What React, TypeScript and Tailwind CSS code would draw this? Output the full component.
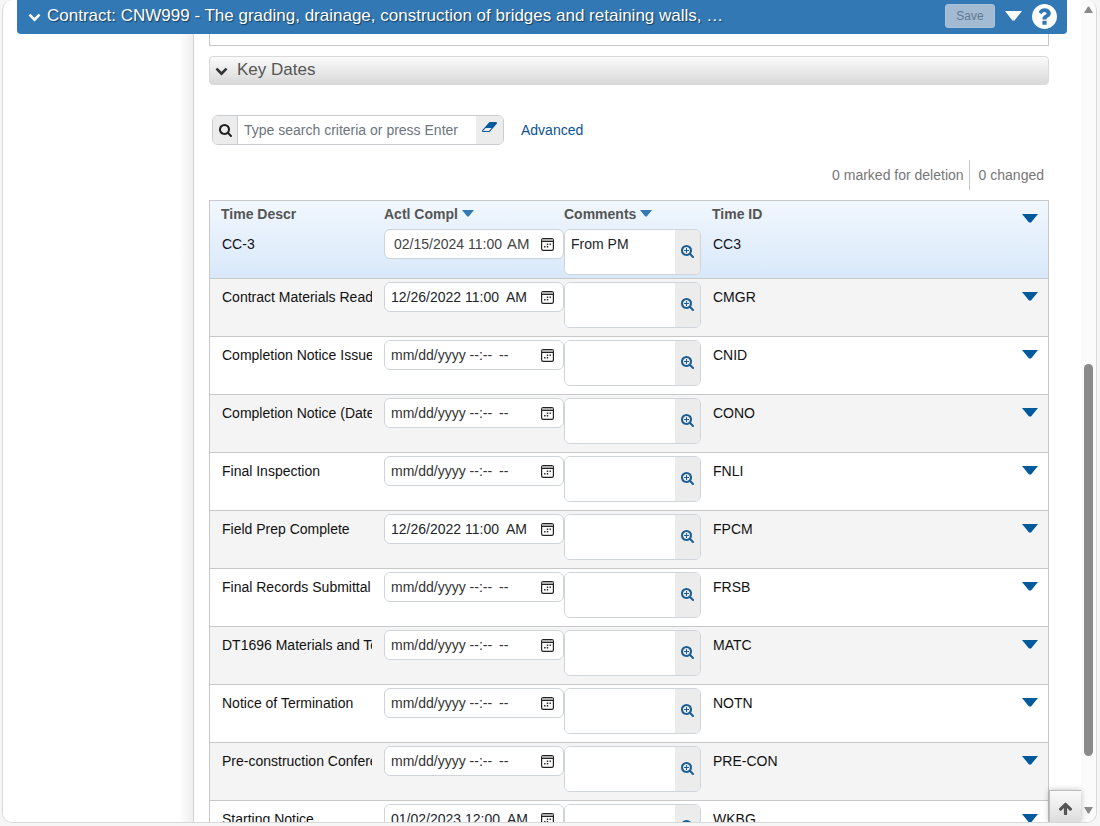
import React from 'react';

type IconProps = { className?: string };

const ChevronDown = ({ className }: IconProps) => (
  <svg viewBox="0 0 1792 1792" className={className} fill="currentColor" aria-hidden="true">
    <path d="M1683 808l-742 741q-19 19-45 19t-45-19L109 808q-19-19-19-45.500T109 717l166-165q19-19 45-19t45 19l531 531 531-531q19-19 45-19t45 19l166 165q19 19 19 45.500t-19 45.500z" />
  </svg>
);

const lens =
  'M1152 704q0-185-131.500-316.500T704 256 387.500 387.500 256 704t131.500 316.500T704 1152t316.500-131.500T1152 704zm512 832q0 52-38 90t-90 38q-54 0-90-38l-343-342q-179 124-399 124-143 0-273.500-55.500t-225-150-150-225T0 704t55.500-273.500 150-225 225-150T704 0t273.500 55.500 225 150 150 225T1408 704q0 220-124 399l343 343q37 37 37 90z';

const SearchIcon = ({ className }: IconProps) => (
  <svg viewBox="0 0 1664 1664" className={className} fill="currentColor" aria-hidden="true">
    <path d={lens} />
  </svg>
);

const SearchPlusIcon = ({ className }: IconProps) => (
  <svg viewBox="0 0 1664 1664" className={className} fill="currentColor" aria-hidden="true">
    <path d={lens} />
    <path d="M640 384h128v256h256v128H768v256H640V768H384V640h256z" />
  </svg>
);

const EraserIcon = ({ className }: IconProps) => (
  <svg viewBox="0 0 1920 1792" className={className} fill="currentColor" aria-hidden="true">
    <path d="M896 1408l336-384h-768l-336 384h768zm1013-1077q15 34 9.500 71.500t-30.500 65.500l-896 1024q-38 44-96 44h-768q-38 0-69.500-20.500t-47.500-54.500q-15-34-9.500-71.500t30.500-65.500l896-1024q38-44 96-44h768q38 0 69.500 20.500t47.500 54.500z" />
  </svg>
);

const HelpIcon = ({ className }: IconProps) => (
  <svg viewBox="128 128 1536 1536" className={className} fill="currentColor" aria-hidden="true">
    <path d="M1024 1376v-192q0-14-9-23t-23-9h-192q-14 0-23 9t-9 23v192q0 14 9 23t23 9h192q14 0 23-9t9-23zm256-672q0-88-55.500-163t-138.500-116-170-41q-243 0-371 213-15 24 8 42l132 100q7 6 19 6 16 0 25-12 53-68 86-92 34-24 86-24 48 0 85.500 26t37.500 59q0 38-20 61t-68 45q-63 28-115.500 86.500T768 1020v36q0 14 9 23t23 9h192q14 0 23-9t9-23q0-19 21.500-49.500t54.500-49.500q32-18 49-28.500t46-35 44.500-48 28-60.500 12.500-81zm384 192q0 209-103 385.500T1281.500 1561 896 1664t-385.500-103T231 1281.500 128 896t103-385.500T510.500 231 896 128t385.500 103T1561 510.500 1664 896z" />
  </svg>
);

const ArrowUpIcon = ({ className }: IconProps) => (
  <svg viewBox="0 0 1792 1792" className={className} fill="currentColor" aria-hidden="true">
    <path d="M1675 971q0 51-37 90l-75 75q-38 38-91 38-54 0-90-38l-294-293v704q0 52-37.500 84.500T960 1664H832q-53 0-90.500-32.500T704 1547V843l-294 293q-36 38-90 38t-90-38l-75-75q-38-38-38-90 0-53 38-91l651-651q35-37 90-37 54 0 91 37l651 651q37 39 37 91z" />
  </svg>
);

const CalendarIcon = ({ className }: IconProps) => (
  <svg viewBox="0 0 13 13" className={className} aria-hidden="true">
    <rect x="0.600" y="0.600" width="11.800" height="11.800" rx="1.600" fill="none" stroke="#222" strokeWidth="1.200" />
    <path d="M1 1.200h11v1.800H1z" fill="#aaa" />
    <path d="M1 3h11v1H1z" fill="#222" />
    <path d="M5.800 5.600h1.400v1.400H5.800zM8.500 5.600h1.400v1.400H8.500zM3.100 8.100h1.400v1.400H3.100zM5.800 8.100h1.400v1.400H5.800z" fill="#222" />
  </svg>
);

const Caret = ({ className }: IconProps) => (
  <svg viewBox="0 0 16 9" preserveAspectRatio="none" className={className} fill="currentColor" aria-hidden="true">
    <path d="M0 0h16L9 8.500H7z" />
  </svg>
);

type Row = { id: string; descr: string; date?: string; meridiem?: string; comment?: string };

const rows: Row[] = [
  { id: 'CC3', descr: 'CC-3', date: '02/15/2024 11:00', meridiem: 'AM', comment: 'From PM' },
  { id: 'CMGR', descr: 'Contract Materials Ready', date: '12/26/2022 11:00\u2002AM' },
  { id: 'CNID', descr: 'Completion Notice Issued' },
  { id: 'CONO', descr: 'Completion Notice (Date)' },
  { id: 'FNLI', descr: 'Final Inspection' },
  { id: 'FPCM', descr: 'Field Prep Complete', date: '12/26/2022 11:00\u2002AM' },
  { id: 'FRSB', descr: 'Final Records Submittal' },
  { id: 'MATC', descr: 'DT1696 Materials and Testing' },
  { id: 'NOTN', descr: 'Notice of Termination' },
  { id: 'PRE-CON', descr: 'Pre-construction Conference' },
  { id: 'WKBG', descr: 'Starting Notice', date: '01/02/2023 12:00\u2002AM' },
];

function DateField({ row }: { row: Row }) {
  return (
    <div className="flex h-[30px] w-[180px] items-center rounded-md border border-[#ced4da] bg-white pr-[9px] pl-[6px]">
      {row.meridiem ? (
        <div className="flex min-w-0 flex-1 items-center gap-1 pl-[3px]">
          <input aria-label={`Actl Compl ${row.id}`} defaultValue={row.date} className="w-[109px] bg-transparent text-[#444] outline-none" />
          <input aria-label={`Actl Compl period ${row.id}`} defaultValue={row.meridiem} className="w-[28px] bg-transparent text-[15px] leading-5 text-[#444] outline-none" />
        </div>
      ) : (
        <input
          aria-label={`Actl Compl ${row.id}`}
          defaultValue={row.date}
          placeholder={'mm/dd/yyyy --:--\u2002--'}
          className="min-w-0 flex-1 bg-transparent text-[#212529] outline-none placeholder:text-[#333]"
        />
      )}
      <button type="button" aria-label={`Pick date ${row.id}`}>
        <CalendarIcon className="block size-[13px]" />
      </button>
    </div>
  );
}

function CommentField({ row }: { row: Row }) {
  return (
    <div className="flex h-[46px] w-[137px] overflow-hidden rounded-md border border-[#ced4da] bg-white">
      <textarea
        aria-label={`Comments ${row.id}`}
        defaultValue={row.comment}
        className="block min-w-0 flex-1 resize-none overflow-hidden bg-white px-[6px] pt-1 leading-5 text-[#212529] outline-none"
      />
      <button type="button" aria-label={`Expand comments ${row.id}`} className="flex w-[25px] items-center justify-center bg-[#ececec] pb-[2px] text-[#1b5e96]">
        <SearchPlusIcon className="block size-[13px]" />
      </button>
    </div>
  );
}

function KeyDatesTable() {
  return (
    <table className="w-full table-fixed border-separate border-spacing-0 border border-b-0 border-[#c8c8c8] bg-[linear-gradient(#f1f7fe,#d8e8f9)] bg-[length:100%_78px] bg-no-repeat text-left">
      <colgroup>
        <col className="w-[174px]" />
        <col className="w-[180px]" />
        <col className="w-[148px]" />
        <col />
        <col className="w-[48px]" />
      </colgroup>
      <thead>
        <tr className="h-[25px] text-[#555]">
          <th className="p-0 pl-[11px] font-bold">Time Descr</th>
          <th className="p-0 font-bold">
            <span className="flex items-center gap-1">
              Actl Compl
              <Caret className="h-[7px] w-[12px] text-[#337ab7]" />
            </span>
          </th>
          <th className="p-0 font-bold">
            <span className="flex items-center gap-1">
              Comments
              <Caret className="h-[7px] w-[12px] text-[#337ab7]" />
            </span>
          </th>
          <th className="p-0 font-bold">Time ID</th>
          <th className="p-0 pt-[13px] pr-[10px] align-top">
            <button type="button" aria-label="Actions CC3" className="ml-auto block text-[#005a9c]">
              <Caret className="block h-[9px] w-4" />
            </button>
          </th>
        </tr>
      </thead>
      <tbody>
        {rows.map((row, i) => {
          const line = 'border-b border-[#c8c8c8] p-0 align-top';
          return (
            <tr key={row.id} className={i === 0 ? 'h-[53px]' : i % 2 ? 'h-[58px] bg-[#f4f4f4]' : 'h-[58px] bg-white'}>
              <td className={line}>
                <div className="mt-2 mr-3 ml-3 overflow-hidden leading-5 whitespace-nowrap">{row.descr}</div>
              </td>
              <td className={line}>
                <div className="pt-[3px]">
                  <DateField row={row} />
                </div>
              </td>
              <td className={line}>
                <div className="pt-[3px]">
                  <CommentField row={row} />
                </div>
              </td>
              <td className={line}>
                <div className="mt-2 ml-px leading-5">{row.id}</div>
              </td>
              <td className={line}>
                {i > 0 && (
                  <button type="button" aria-label={`Actions ${row.id}`} className="mt-[13px] mr-[10px] ml-auto block text-[#005a9c]">
                    <Caret className="block h-[9px] w-4" />
                  </button>
                )}
              </td>
            </tr>
          );
        })}
      </tbody>
    </table>
  );
}

export default function App() {
  return (
    <div className="flex h-screen flex-col bg-[#f6f6f6] pr-[3px] pb-[3px] pl-[2px] font-['Liberation_Sans',Arial,sans-serif] text-sm text-[#111]">
      <div className="flex min-h-0 flex-1 overflow-hidden rounded-[10px] border border-t-0 border-[#d9d9d9] bg-white">
        <div className="relative flex min-w-0 flex-1 flex-col">
          <header className="mx-[14px] flex h-[34px] shrink-0 items-center rounded-b-[4px] bg-[#3178b5] pr-[10px] pl-[11px] pb-[2px] text-white">
            <ChevronDown className="mr-[6px] size-[13px] shrink-0" />
            <h1 className="min-w-0 flex-1 truncate text-[17px] leading-6 [text-shadow:1px_1px_1px_rgba(0,0,0,0.5)]">
              Contract: CNW999 - The grading, drainage, construction of bridges and retaining walls, …
            </h1>
            <button type="button" disabled className="h-6 w-[50px] rounded-[3px] border border-[#a9c3da] bg-[#a2bbd3] text-xs text-[#62788f]">
              Save
            </button>
            <button type="button" aria-label="More actions" className="ml-[10px]">
              <Caret className="block h-[10px] w-[17px]" />
            </button>
            <button type="button" aria-label="Help" className="ml-[10px]">
              <HelpIcon className="block size-[25px]" />
            </button>
          </header>

          <div className="flex min-h-0 flex-1 overflow-hidden">
            <aside className="w-[191px] shrink-0 border-r border-[#d5d5d5] bg-[linear-gradient(to_left,#eeeeee,#ffffff_14px)]" />
            <main className="min-w-0 flex-1 pr-8 pl-[15px]">
              <div className="h-3 border border-t-0 border-[#c8c8c8]" />

              <h2 className="mt-[10px] flex h-[29px] items-center rounded-[4px] border border-[#d9d9d9] bg-[linear-gradient(#fafafa,#d9d9d9)] text-[17px] text-[#555]">
                <button type="button" className="flex items-center gap-[9px] pl-[5px]">
                  <ChevronDown className="size-[13px] text-[#333]" />
                  Key Dates
                </button>
              </h2>

              <div className="mt-[30px] ml-[3px] flex items-center">
                <div className="flex h-[30px] w-[292px] overflow-hidden rounded-md border border-[#c9cdd0]">
                  <button type="button" aria-label="Search" className="flex w-[25px] items-center justify-center border-r border-[#c9cdd0] bg-[#ececec] text-[#222]">
                    <SearchIcon className="block size-[13px]" />
                  </button>
                  <input aria-label="Search criteria" placeholder="Type search criteria or press Enter" className="min-w-0 flex-1 px-[6px] outline-none placeholder:text-[#6c757d]" />
                  <button type="button" aria-label="Clear search" className="flex w-[27px] items-center justify-center bg-[#ececec] pb-[6px] text-[#005a9c]">
                    <EraserIcon className="block h-[14px] w-[15px]" />
                  </button>
                </div>
                <a href="#advanced" className="ml-[17px] text-[#0b5394]">
                  Advanced
                </a>
              </div>

              <div className="mt-[15px] mb-[10px] flex h-[30px] items-stretch justify-end leading-[30px] text-[#777]">
                <span className="border-r border-[#c8c8c8] pr-[5px]">0 marked for deletion</span>
                <span className="pr-[5px] pl-[9px]">0 changed</span>
              </div>

              <KeyDatesTable />
            </main>
          </div>

          <button
            type="button"
            aria-label="Back to top"
            className="absolute right-0 bottom-0 flex size-8 items-center justify-center border-t border-l border-[#bbb] bg-[linear-gradient(#fafafa,#dddddd)] pt-1 text-[#555] shadow-[0_0_6px_rgba(0,0,0,0.25)]"
          >
            <ArrowUpIcon className="block size-[15px]" />
          </button>
        </div>

        <div aria-hidden="true" className="flex w-[15px] shrink-0 flex-col items-center bg-[#fbfbfb] pt-[6px] pb-[8px]">
          <Caret className="h-[7px] w-[9px] shrink-0 rotate-180 text-[#8a8a8a]" />
          <div className="grow-[351]" />
          <div className="w-[9px] grow-[392] rounded-full bg-[#8a8a8a]" />
          <div className="grow-[51]" />
          <Caret className="h-[7px] w-[9px] shrink-0 text-[#8a8a8a]" />
        </div>
      </div>
    </div>
  );
}
